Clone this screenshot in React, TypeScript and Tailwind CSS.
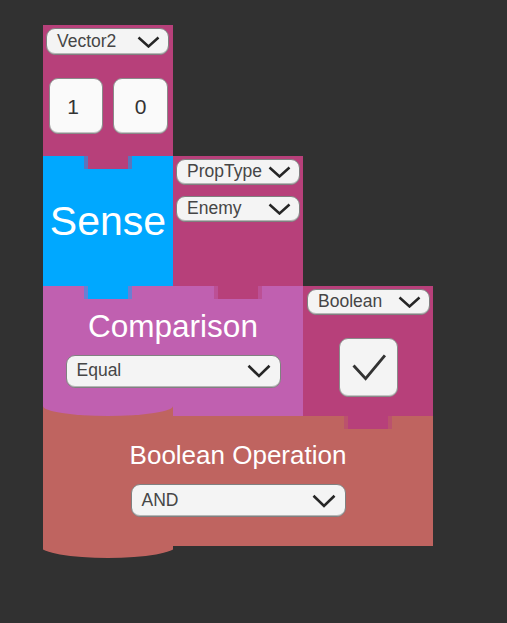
import React from 'react'

// block colours
// pink   #b7407a
// blue   #00a8ff
// purple #c060b0
// red    #bf6460

function Chevron({ big }: { big?: boolean }) {
  return big ? (
    <svg width="24" height="14" viewBox="0 0 24 14" className="shrink-0">
      <path d="M1.5 1.8 L12 12 L22.5 1.8" fill="none" stroke="#262626" strokeWidth="2.6" />
    </svg>
  ) : (
    <svg width="23" height="12" viewBox="0 0 23 12" className="shrink-0">
      <path d="M1.5 1.5 L11.5 10.5 L21.5 1.5" fill="none" stroke="#262626" strokeWidth="2.5" />
    </svg>
  )
}

function Dropdown({ label, className, big }: { label: string; className: string; big?: boolean }) {
  return (
    <div
      className={`flex items-center justify-between rounded-[9px] border border-[#808080] bg-[#f4f4f4] pl-[10px] shadow-[inset_0_-1px_0_#b5b5b5] ${
        big ? 'pr-[9px]' : 'pr-[8px]'
      } ${className}`}
    >
      <span className="text-[17.5px] leading-none text-[#464646]">{label}</span>
      <Chevron big={big} />
    </div>
  )
}

function NumberBox({ value, className }: { value: string; className: string }) {
  return (
    <div
      className={`flex h-[56px] items-center justify-center rounded-[9px] border border-[#8a8a8a] bg-[#fafafa] text-[21px] leading-none text-[#333] shadow-[inset_0_-1px_0_#c4c4c4] ${className}`}
    >
      {value}
    </div>
  )
}

// tab that hangs below a block into the one under it
function Tab({ className }: { className: string }) {
  return (
    <div className={`absolute left-[41px] top-full z-10 h-[13px] w-[48px] border-x-4 bg-clip-padding ${className}`} />
  )
}

export default function App() {
  return (
    <div className="min-h-screen w-full bg-[#313131] pl-[43px] pt-[25px] font-['Liberation_Sans',Arial,sans-serif]">
      <div className="grid grid-cols-[130px_130px_130px] grid-rows-[131px_130px_130px_130px]">
        {/* Vector2 */}
        <div className="relative col-start-1 row-start-1 flex flex-col bg-[#b7407a]">
          <Dropdown label="Vector2" className="ml-[3px] mt-[3px] h-[27px] w-[123px]" />
          <div className="ml-[6px] mt-[23px] flex gap-[10px]">
            <NumberBox value="1" className="w-[54px] pr-[6px]" />
            <NumberBox value="0" className="w-[55px]" />
          </div>
          <Tab className="bg-[#b7407a] border-[#b7407a]/50" />
        </div>

        {/* Sense */}
        <div className="relative col-start-1 row-start-2 flex items-center justify-center bg-[#00a8ff]">
          <span className="text-[41px] leading-none text-white">Sense</span>
          <Tab className="bg-[#00a8ff] border-[#00a8ff]/45" />
        </div>

        {/* PropType */}
        <div className="relative col-start-2 row-start-2 flex flex-col gap-[11px] bg-[#b7407a] pl-[3px] pt-[3px]">
          <Dropdown label="PropType" className="h-[26px] w-[124px]" />
          <Dropdown label="Enemy" className="h-[26px] w-[124px]" />
          <Tab className="bg-[#b7407a] border-[#b7407a]/50" />
        </div>

        {/* Comparison */}
        <div className="relative col-span-2 col-start-1 row-start-3 flex flex-col items-center bg-[#c060b0]">
          <span className="mt-[25px] text-[31.5px] leading-none text-white">Comparison</span>
          <Dropdown label="Equal" big className="mt-[12px] h-[33px] w-[215px]" />
          <div className="absolute bottom-0 left-0 h-[10px] w-[130px] overflow-hidden bg-[#bf6460]">
            <div className="absolute left-0 top-[-10px] h-[20px] w-[130px] rounded-[50%] bg-[#c060b0]" />
          </div>
        </div>

        {/* Boolean */}
        <div className="relative col-start-3 row-start-3 flex flex-col bg-[#b7407a]">
          <Dropdown label="Boolean" className="ml-[4px] mt-[3px] h-[26px] w-[123px]" />
          <div className="ml-[36px] mt-[23px] flex h-[59px] w-[59px] items-center justify-center rounded-[9px] border border-[#8a8a8a] bg-[#f4f4f4] shadow-[inset_0_-1px_0_#c4c4c4]">
            <svg width="59" height="59" viewBox="0 0 59 59">
              <path d="M14 27.5 L26.5 41 L46.5 17" fill="none" stroke="#333" strokeWidth="3" />
            </svg>
          </div>
          <Tab className="bg-[#b7407a] border-[#b7407a]/50" />
        </div>

        {/* Boolean Operation */}
        <div className="relative col-span-3 col-start-1 row-start-4 flex flex-col items-center bg-[#bf6460]">
          <span className="mt-[26px] text-[26px] leading-none text-white">Boolean Operation</span>
          <Dropdown label="AND" big className="mt-[16px] h-[33px] w-[215px]" />
          <div className="absolute left-0 top-full h-[12px] w-[130px] overflow-hidden">
            <div className="absolute left-[-3px] top-[-12px] h-[24px] w-[136px] rounded-[50%] bg-[#bf6460]" />
          </div>
        </div>
      </div>
    </div>
  )
}
